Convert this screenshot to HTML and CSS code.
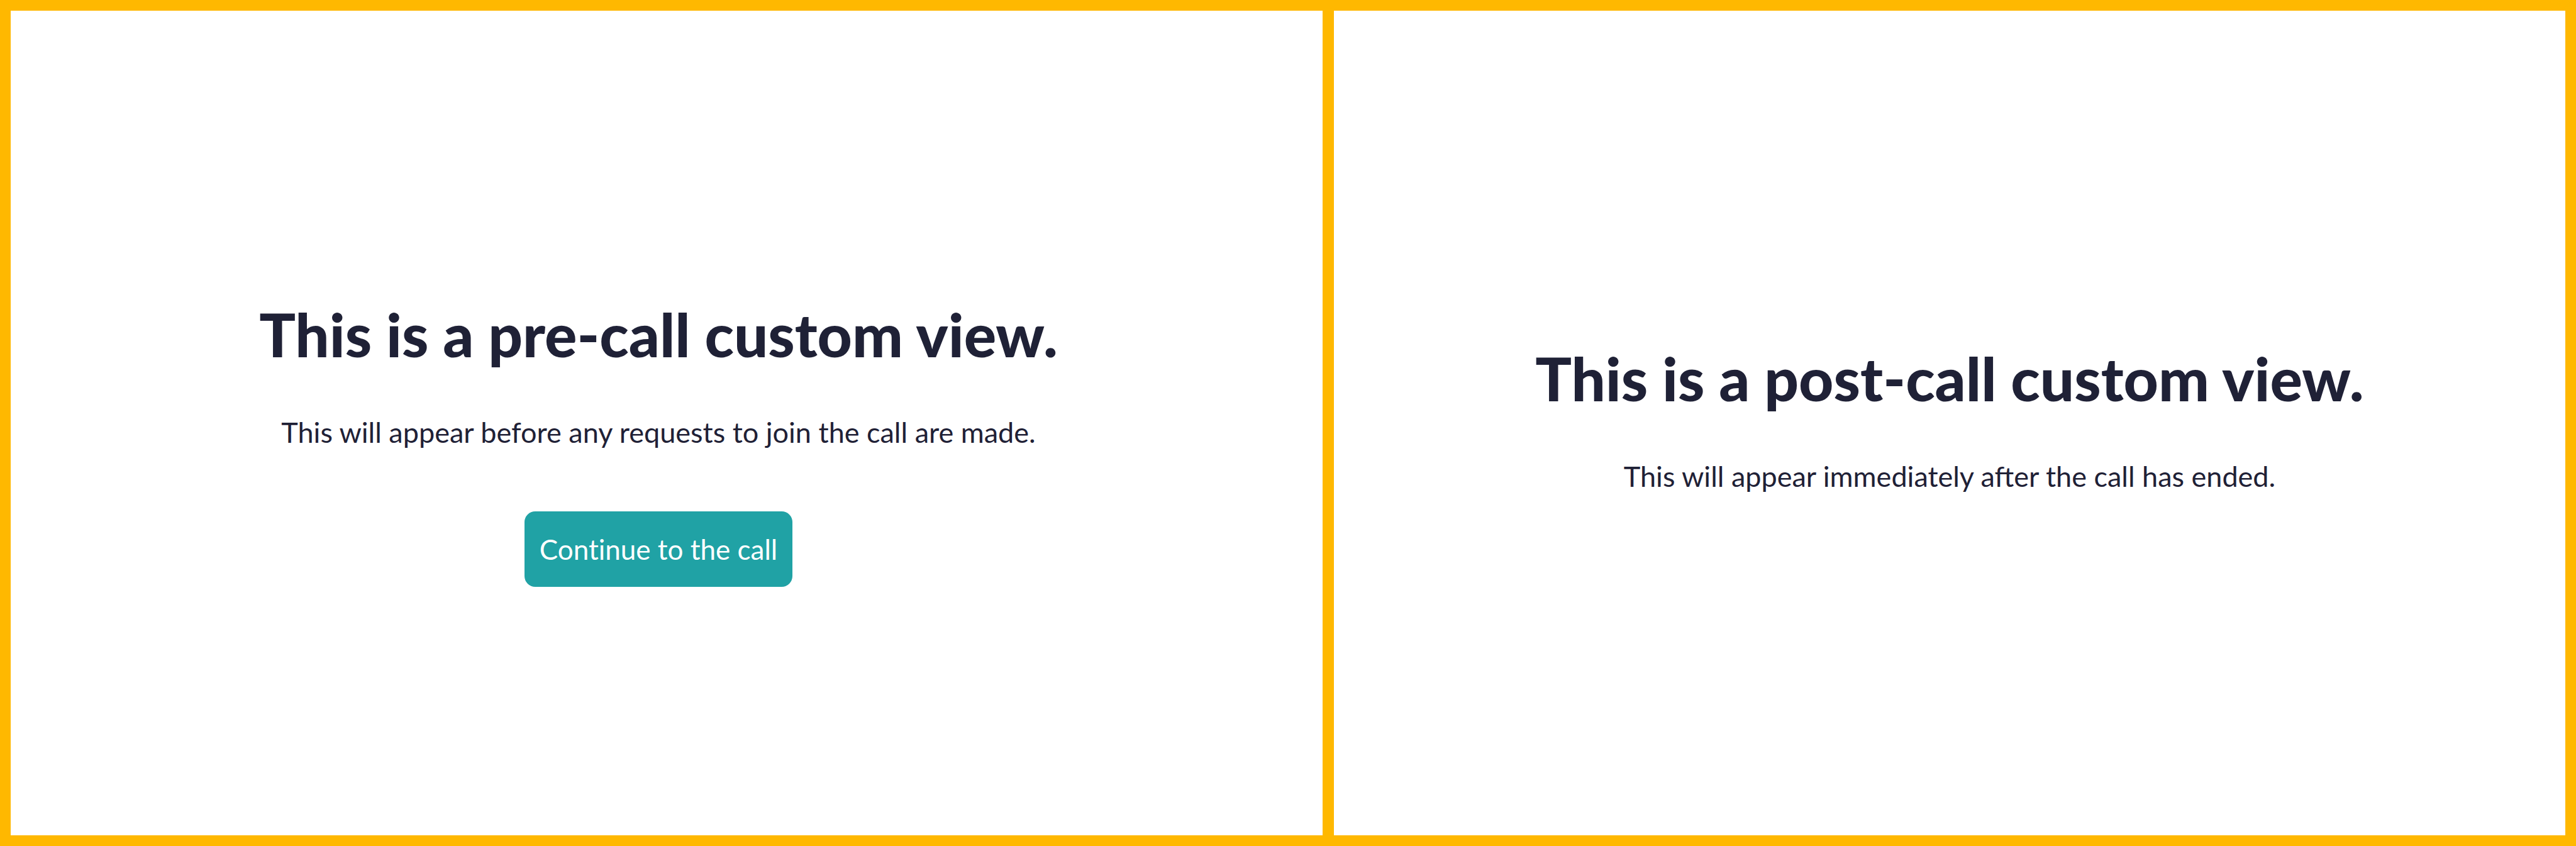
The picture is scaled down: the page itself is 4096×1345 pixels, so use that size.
FILE: index.html
```html
<!DOCTYPE html>
<html lang="en">
<head>
<meta charset="utf-8">
<meta name="viewport" content="width=device-width, initial-scale=1">
<title>Custom call views</title>
<link rel="stylesheet" href="styles.css">
</head>
<body>
<main class="views">
  <section class="view view-pre">
    <h1 class="title">This is a pre-call custom view.</h1>
    <p class="message">This will appear before any requests to join the call are made.</p>
    <button class="continue" type="button">Continue to the call</button>
  </section>
  <section class="view view-post">
    <h1 class="title">This is a post-call custom view.</h1>
    <p class="message">This will appear immediately after the call has ended.</p>
  </section>
</main>
</body>
</html>
```
FILE: styles.css
```css
* {
  box-sizing: border-box;
}

body {
  margin: 0;
  font-family: Lato, "Open Sans", sans-serif;
  color: #1f2136;
}

.views {
  display: grid;
  grid-template-columns: 2086fr 1958fr;
  gap: 18px;
  min-height: 100vh;
  padding: 17px;
  background: #ffb800;
}

.view {
  display: flex;
  flex-direction: column;
  align-items: center;
  justify-content: center;
  background: #fff;
  text-align: center;
}

.view-pre {
  padding: 62px 26px 0 0;
}

.view-post {
  padding-bottom: 16px;
}

.title {
  margin: 0 0 72px;
  font-size: 96px;
  font-weight: 900;
  line-height: 112px;
}

.message {
  margin: 0;
  font-size: 45px;
  line-height: 56px;
}

.continue {
  margin-top: 98px;
  padding: 32px 24px;
  border: 0;
  border-radius: 17px;
  background: #20a2a5;
  color: #fff;
  font-family: inherit;
  font-size: 44px;
  font-variant-ligatures: none;
  line-height: 56px;
}
```
